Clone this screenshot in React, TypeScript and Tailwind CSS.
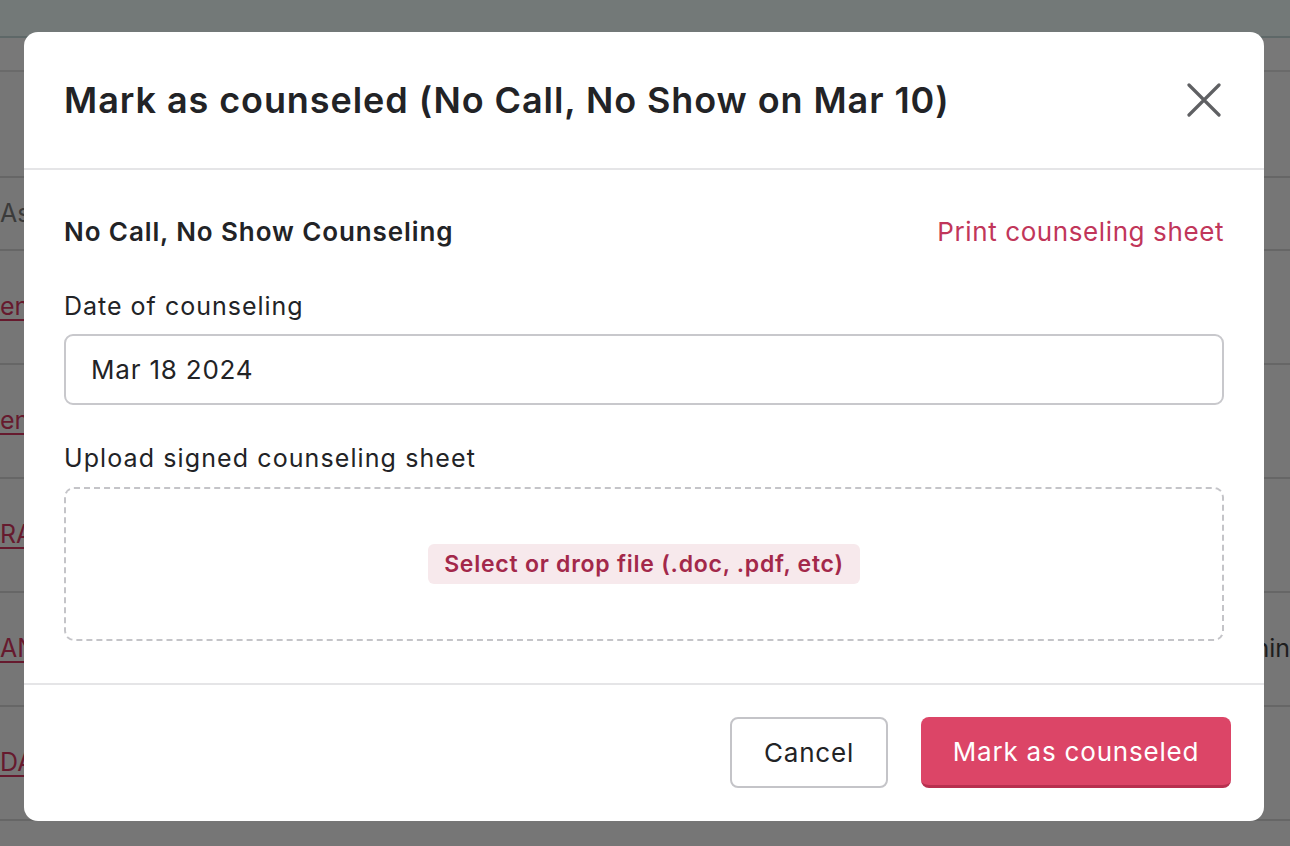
import React from 'react';

const font = { fontFamily: 'Inter, "Noto Sans", "Liberation Sans", sans-serif' };

function BackgroundPage() {
  const rows = [
    { left: 'en', right: '' },
    { left: 'en', right: '' },
    { left: 'RA', right: '' },
    { left: 'AN', right: 'hin' },
    { left: 'DA', right: '' },
  ];
  return (
    <div className="h-[846px] w-[1290px] overflow-hidden bg-[#767676]">
      <div className="h-[38px] border-b-2 border-[#5e6868] bg-[#737978]" />
      <div className="h-[34px] border-b-2 border-[#6a6a6a] bg-[#787878]" />
      <div className="h-[106px] border-b-2 border-[#666666]" />
      <div className="flex h-[73px] items-center border-b-2 border-[#666666] text-[25px] text-[#3b3b3b]">
        <span>As</span>
      </div>
      {rows.map((r, i) => (
        <div
          key={i}
          className="flex h-[114px] items-center justify-between border-b-2 border-[#666666] text-[25px]"
        >
          <span className="text-[#661a2e] underline decoration-2 underline-offset-4">{r.left}</span>
          <span className="text-[#1e1e1e]">{r.right}</span>
        </div>
      ))}
    </div>
  );
}

export default function App() {
  return (
    <div className="relative h-[846px] w-[1290px] overflow-hidden" style={font}>
      <BackgroundPage />

      <div className="absolute left-[24px] top-[32px] w-[1240px] rounded-[14px] bg-white text-[#222326]">
        <div className="flex h-[138px] items-center justify-between border-b-2 border-[#e5e5e7] px-[40px]">
          <h1 className="text-[36px] font-semibold tracking-[0.92px]">
            Mark as counseled (No Call, No Show on Mar 10)
          </h1>
          <button className="flex h-[40px] w-[40px] items-center justify-center text-[#5f6063]">
            <svg width="34" height="34" viewBox="0 0 34 34" fill="none">
              <path d="M2 2L32 32M32 2L2 32" stroke="currentColor" strokeWidth="3.2" strokeLinecap="round" />
            </svg>
          </button>
        </div>

        <div className="flex flex-col px-[40px] pt-[46px] pb-[42px]">
          <div className="flex items-center justify-between leading-[32px]">
            <h2 className="text-[26px] font-semibold tracking-[0.9px]">No Call, No Show Counseling</h2>
            <a className="text-[26px] tracking-[0.6px] text-[#c1365a]">Print counseling sheet</a>
          </div>

          <label className="mt-[42px] text-[25px] leading-[32px] tracking-[1px]">Date of counseling</label>
          <div className="mt-[12px] flex h-[71px] items-center rounded-[9px] border-2 border-[#c8c8cc] px-[25px] text-[26px] tracking-[0.8px]">
            Mar 18 2024
          </div>

          <label className="mt-[37px] text-[25px] leading-[32px] tracking-[1.1px]">
            Upload signed counseling sheet
          </label>
          <div className="mt-[13px] flex h-[154px] items-center justify-center rounded-[10px] border-2 border-dashed border-[#c4c4c8]">
            <button className="h-[40px] rounded-[6px] bg-[#f7e9ec] px-[16px] text-[23px] font-semibold tracking-[0.75px] text-[#a3284a]">
              Select or drop file (.doc, .pdf, etc)
            </button>
          </div>
        </div>

        <div className="flex items-center justify-end gap-[33px] border-t-2 border-[#e5e5e7] pb-[33px] pl-[40px] pr-[33px] pt-[32px]">
          <button className="h-[71px] w-[158px] rounded-[8px] border-2 border-[#c4c4c8] bg-white text-[26px] tracking-[0.8px] text-[#222326]">
            Cancel
          </button>
          <button className="h-[71px] w-[310px] rounded-[8px] border-b-[3px] border-[#b8304f] bg-[#dc4567] text-[26px] tracking-[0.8px] text-white">
            Mark as counseled
          </button>
        </div>
      </div>
    </div>
  );
}
